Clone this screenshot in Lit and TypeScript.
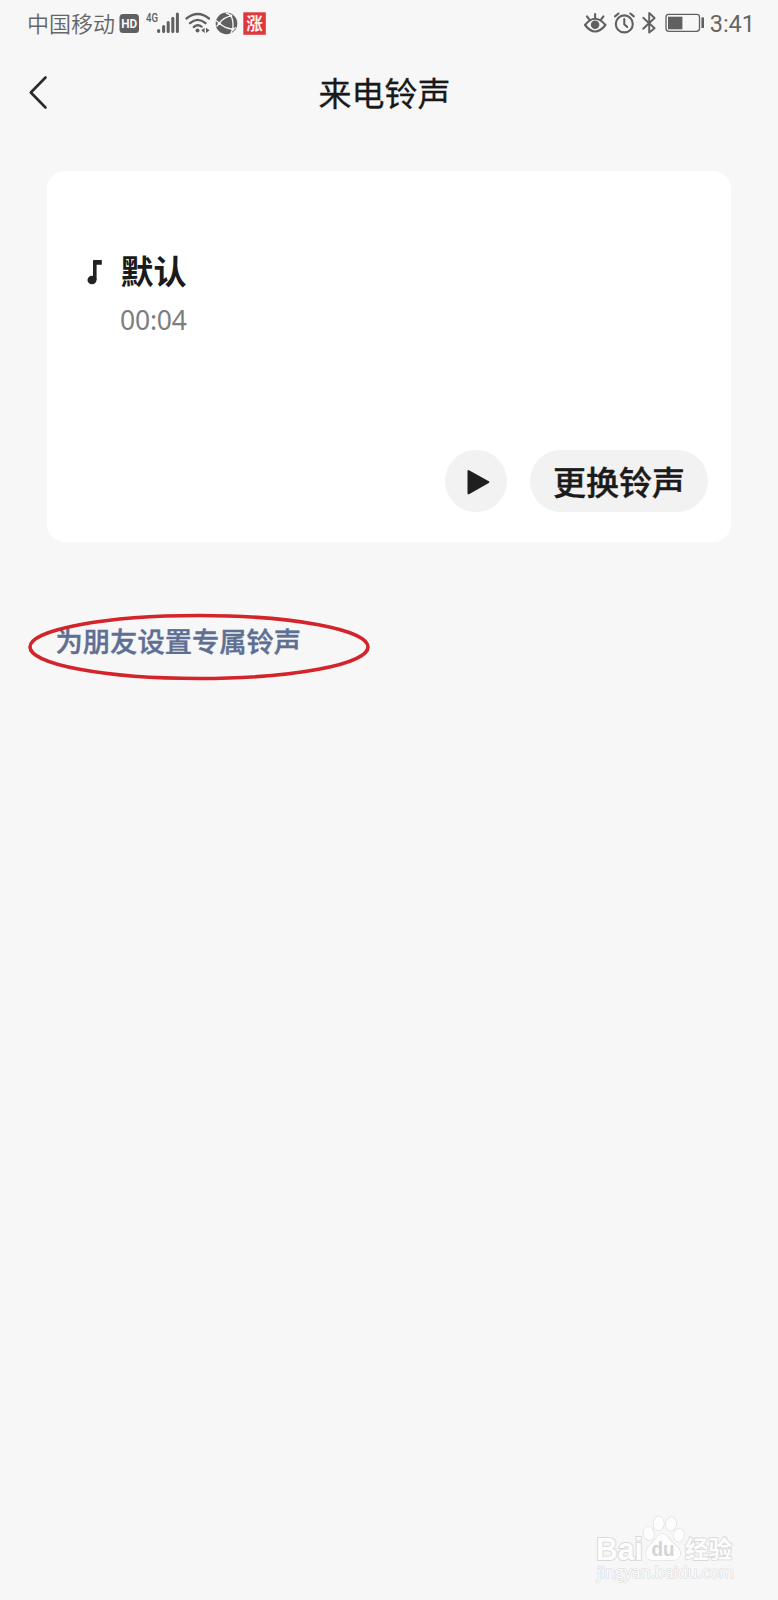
import { LitElement, html, css, svg } from "lit";
import { customElement } from "lit/decorators.js";

@customElement("status-bar")
class StatusBar extends LitElement {
  static styles = css`
    :host { display: flex; justify-content: space-between; height: 46px; padding: 0 23px 0 27px; box-sizing: border-box; color: #666; }
    .group { display: flex; align-items: center; }
    .carrier { font-size: 22px; line-height: 44px; height: 46px; width: 88px; white-space: nowrap; font-weight: 350; }
    svg { display: block; font-family: Roboto, sans-serif; }
    .cjk { font-family: "Noto Sans CJK SC", sans-serif; }
    .time { font: 23.5px/46px Roboto, sans-serif; margin-left: 4px; padding-top: 2px; }
  `;
  render() {
    return html`
      <div class="group">
        <span class="carrier">中国移动</span>
        <svg width="160" height="46" viewBox="115 0 160 46" fill="#606060">
          <rect x="119.5" y="14" width="19.5" height="19" rx="3.5" />
          <text x="121.2" y="28.2" font-size="13" font-weight="700" fill="#f7f7f7" textLength="16" lengthAdjust="spacingAndGlyphs">HD</text>
          <text x="146" y="22" font-size="13" font-weight="500" textLength="12" lengthAdjust="spacingAndGlyphs">4G</text>
          ${[[158.6, 30.4], [163.6, 26.5], [168.2, 22.5], [172.8, 18.2], [177.4, 14]].map(
            ([x, y]) => svg`<path d="M${x} ${y}V31.4" stroke="#606060" stroke-width="3" stroke-linecap="round" />`
          )}
          <g fill="none" stroke="#606060" stroke-width="2.3" stroke-linecap="round">
            <path d="M186.5 18.5Q197.7 9.5 209 18.5M190 23.2Q197.7 16.5 205.5 23.2M193.8 27Q197.7 23.7 201.6 26.6" />
          </g>
          <circle cx="197.5" cy="30.4" r="2" />
          <path d="M204.6 27.7V33L201.2 30.3ZM206 27.7V33L209.6 30.3Z" />
          <circle cx="226.5" cy="23.4" r="10.8" />
          <g fill="none" stroke="#f7f7f7" stroke-width="1.3">
            <path d="M219.3 23.3Q223 17.5 231 15.8Q233.8 21.5 232.8 29.2Q225 28.5 219.3 23.3M216.2 20.5L219.3 23.3L216.6 26.5M231 15.8Q229 13.8 226 13M232.8 29.2L236 27.5M232.8 29.2L231 33" />
          </g>
          <g fill="#f7f7f7"><circle cx="219.3" cy="23.3" r="1.5" /><circle cx="231" cy="15.8" r="1.4" /><circle cx="232.8" cy="29.2" r="1.5" /></g>
          <rect x="243.3" y="12.3" width="22.5" height="22.5" fill="#de383e" />
          <text class="cjk" x="254.5" y="29.8" font-size="16.5" font-weight="700" fill="#fff0ea" text-anchor="middle">涨</text>
        </svg>
      </div>
      <div class="group">
        <svg width="123" height="46" viewBox="583 0 123 46" fill="none" stroke="#606060" stroke-width="2.1" stroke-linecap="round" stroke-linejoin="round">
          <path d="M585 25Q595 12.5 605.5 25Q595 38 585 25ZM595.1 14V18M587 16.3L589.2 19.3M603.4 16.3L601.2 19.3" />
          <circle cx="595.1" cy="24.8" r="3.2" fill="#606060" />
          <circle cx="624.3" cy="23.9" r="8.5" />
          <path d="M624.3 19V24.2L627.2 27M615 16.4L618.5 13.5M630.3 13.5L633.8 16.4" />
          <path d="M643.2 17.8L654.6 28.2L649.2 32.6V13L654.6 18L643.2 28.7" stroke-width="1.9" />
          <rect x="666" y="14.4" width="33.5" height="17" rx="2.8" stroke-width="1.3" />
          <path d="M668 16.7H682.4V29.3H668Z" fill="#606060" stroke="none" />
          <path d="M702.7 17.4V28" stroke-width="2.6" stroke-linecap="butt" />
        </svg>
        <span class="time">3:41</span>
      </div>`;
  }
}

@customElement("ringtone-card")
class RingtoneCard extends LitElement {
  static styles = css`
    :host { display: flex; flex-direction: column; justify-content: space-between; box-sizing: border-box; height: 371px; margin: 0 47px; padding: 77px 23px 30px 38px; background: #fff; border-radius: 18px; color: #1b1b1b; }
    .song { display: grid; grid-template-columns: 35px 1fr; }
    .note { display: block; margin-top: 11px; }
    .name { font-size: 33px; line-height: 44px; font-weight: 700; padding-left: 0.5px; }
    .length { grid-column: 2; font: 26.5px/36px "Noto Sans", sans-serif; letter-spacing: -0.2px; color: #7d7d7d; margin-top: 10px; }
    .actions { display: flex; justify-content: flex-end; gap: 23px; }
    .play { width: 62px; height: 62px; border-radius: 50%; background: #f2f2f2; }
    .play svg { display: block; }
    .change { width: 178px; height: 62px; border-radius: 31px; background: #f2f2f2; font-size: 33px; line-height: 63px; font-weight: 500; -webkit-text-stroke: 0.4px; text-align: center; white-space: nowrap; }
  `;
  render() {
    return html`
      <div class="song">
        <svg class="note" width="18" height="28" viewBox="85 259 18 28">
          <ellipse cx="92" cy="280" rx="4.5" ry="4.3" fill="#222" />
          <path d="M93 260.8Q93 260 94 260H101.8V264.7H96.6V280H93Z" fill="#222" />
        </svg>
        <div class="name">默认</div>
        <div class="length">00:04</div>
      </div>
      <div class="actions">
        <div class="play">
          <svg width="62" height="62" viewBox="445 450 62 62"><path d="M468.5 471L488.3 482.2L468.5 493.3Z" fill="#1f1f1f" stroke="#1f1f1f" stroke-width="2" stroke-linejoin="round" /></svg>
        </div>
        <div class="change">更换铃声</div>
      </div>`;
  }
}

@customElement("baidu-watermark")
class BaiduWatermark extends LitElement {
  static styles = css`
    :host { position: absolute; left: 590px; top: 1510px; }
    svg { display: block; fill: #fdfdfd; stroke: #dadada; stroke-width: 1.1; font-family: "Open Sans", sans-serif; paint-order: stroke; }
    .latin { font-family: "Liberation Sans", sans-serif; font-weight: 700; }
    .cjk { font-family: "Noto Sans CJK SC", sans-serif; font-weight: 700; }
    .du { fill: #d4d4d4; stroke: none; font-weight: 700; font-family: "Liberation Sans", sans-serif; }
  `;
  render() {
    return html`<svg width="150" height="80" viewBox="590 1510 150 80">
      <text class="latin" x="596" y="1559.5" font-size="31" textLength="47" lengthAdjust="spacingAndGlyphs" stroke-width="2">Bai</text>
      <ellipse cx="648.7" cy="1533.5" rx="5.2" ry="6.8" transform="rotate(-10 648.7 1533.5)" />
      <ellipse cx="658.7" cy="1523.5" rx="5.2" ry="7" />
      <ellipse cx="671" cy="1524" rx="5.2" ry="6.8" transform="rotate(12 671 1524)" />
      <ellipse cx="678.8" cy="1535.3" rx="5.2" ry="6.5" transform="rotate(15 678.8 1535.3)" />
      <path d="M662.5 1534C667 1534 669 1539 673 1543C678 1547 681 1550 680 1555C679 1560 675 1560.5 670 1560H655C650 1561 646.5 1559 646 1554C645.5 1549 649 1546 653 1542C656 1538 658 1534 662.5 1534Z" />
      <text class="du" x="651.5" y="1555.5" font-size="19.5" textLength="23" lengthAdjust="spacingAndGlyphs">du</text>
      <text class="cjk" x="685" y="1557.5" font-size="23.5" textLength="47" stroke-width="1.8">经验</text>
      <text x="597" y="1577.5" font-size="15.5" textLength="137" lengthAdjust="spacingAndGlyphs" stroke-width="1.2">jingyan.baidu.com</text>
    </svg>`;
  }
}

@customElement("app-root")
class AppRoot extends LitElement {
  static styles = css`
    :host { display: block; position: relative; height: 1600px; background: #f7f7f7; overflow: hidden; font-family: "Noto Sans CJK SC", sans-serif; }
    .header { display: grid; grid-template-columns: 100px 1fr 100px; align-items: center; height: 94px; padding: 0 8px 0 0; margin-bottom: 31px; }
    .back { display: block; margin-left: 26px; }
    .title { text-align: center; font-size: 33px; line-height: 92px; height: 94px; color: #191919; -webkit-text-stroke: 0.3px; padding-right: 1px; }
    .link { position: relative; margin: 74px 0 0 55.5px; width: max-content; font-size: 27.3px; line-height: 48px; font-weight: 500; color: #5e6f94; -webkit-text-stroke: 0.4px; }
    .ring { position: absolute; left: -28.5px; top: -4px; }
  `;
  render() {
    return html`
      <status-bar></status-bar>
      <div class="header">
        <svg class="back" width="24" height="36" viewBox="26 75 24 36"><path d="M45.5 77.5L30.8 92.5L45.5 107.5" fill="none" stroke="#2a2a2a" stroke-width="2.6" stroke-linecap="round" stroke-linejoin="round" /></svg>
        <div class="title">来电铃声</div>
      </div>
      <ringtone-card></ringtone-card>
      <div class="link">为朋友设置专属铃声
        <svg class="ring" width="344" height="70" viewBox="27 612 344 70"><ellipse cx="199" cy="647" rx="169" ry="31.5" fill="none" stroke="#d3242c" stroke-width="3.6" /></svg>
      </div>
      <baidu-watermark></baidu-watermark>`;
  }
}
